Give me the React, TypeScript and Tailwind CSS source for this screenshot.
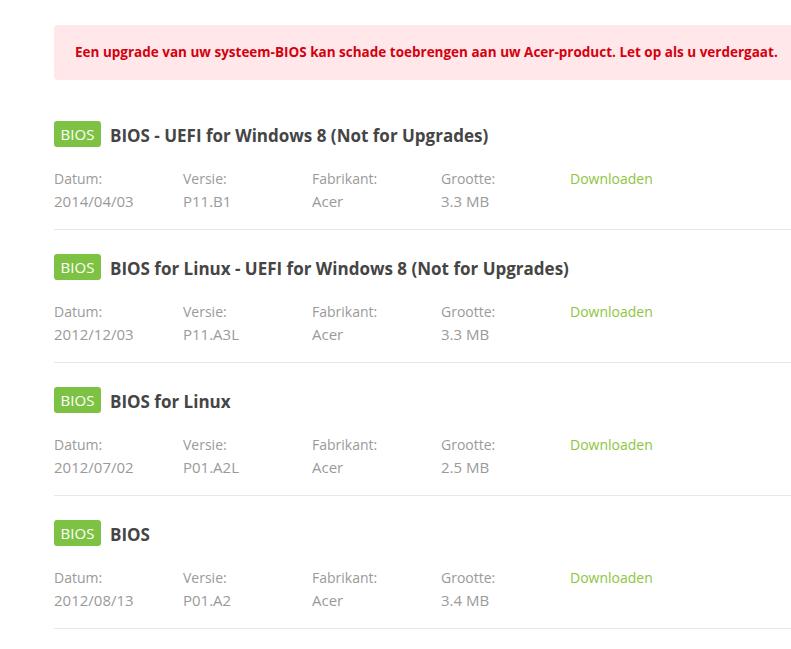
const ITEMS = [
  { title:"BIOS - UEFI for Windows 8 (Not for Upgrades)", date:"2014/04/03", version:"P11.B1",  maker:"Acer", size:"3.3 MB" },
  { title:"BIOS for Linux - UEFI for Windows 8 (Not for Upgrades)", date:"2012/12/03", version:"P11.A3L", maker:"Acer", size:"3.3 MB" },
  { title:"BIOS for Linux", date:"2012/07/02", version:"P01.A2L", maker:"Acer", size:"2.5 MB" },
  { title:"BIOS",           date:"2012/08/13", version:"P01.A2",  maker:"Acer", size:"3.4 MB" },
];

function Field({ label, value }: { label:string; value:string }) {
  return (
    <div className="w-[129px] shrink-0">
      <p className="leading-[23px] text-[14px]">{label}</p>
      <p className="leading-[23px]">{value}</p>
    </div>
  );
}

export default function App() {
  return (
    <div className="min-h-[649px] w-[791px] overflow-hidden bg-white text-[15px] text-[#9a9a9a]"
      style={{ fontFamily:"'Open Sans', 'Noto Sans', sans-serif" }}>
      <div className="pl-[54px] pt-[25px] w-[840px]">

        {/* Warning */}
        <div className="h-[55px] rounded-[4px] bg-[#ffe7ea] pl-[21px] flex items-center">
          <p className="text-[13.5px] font-bold text-[#d4000f]">
            Een upgrade van uw systeem-BIOS kan schade toebrengen aan uw Acer-product. Let op als u verdergaat.
          </p>
        </div>

        <div className="mt-[17px]">
          {ITEMS.map((it) => (
            <div key={it.title} className="pt-[24px] pb-[16px] border-b border-[#e8e8e8]">
              <div className="flex items-center gap-[9px] h-[26px]">
                <span className="h-[26px] w-[47px] rounded-[3px] bg-[#7dc242] text-white text-[15px] flex items-center justify-center">BIOS</span>
                <h2 className="text-[17px] font-bold text-[#454545] translate-y-[2px]">{it.title}</h2>
              </div>
              <div className="flex mt-[20px]">
                <Field label="Datum:" value={it.date} />
                <Field label="Versie:" value={it.version} />
                <Field label="Fabrikant:" value={it.maker} />
                <Field label="Grootte:" value={it.size} />
                <a className="leading-[23px] text-[14px] text-[#8cc63e] cursor-pointer">Downloaden</a>
              </div>
            </div>
          ))}
        </div>
      </div>
    </div>
  );
}
